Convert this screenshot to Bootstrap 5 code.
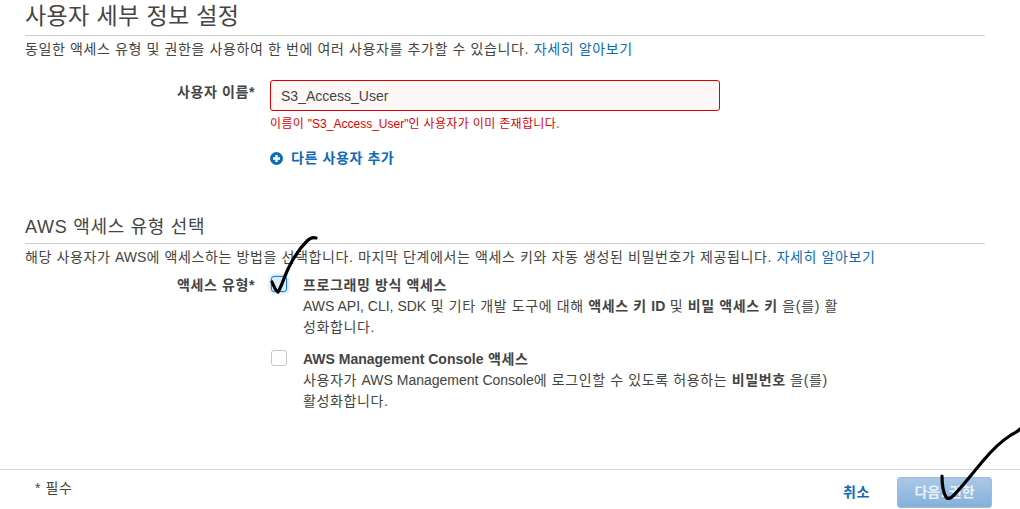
<!DOCTYPE html>
<html lang="ko">
<head>
<meta charset="utf-8">
<title>사용자 세부 정보 설정</title>
<link href="https://cdn.jsdelivr.net/npm/bootstrap@5.3.0/dist/css/bootstrap.min.css" rel="stylesheet">
<style>
html,body{height:509px;overflow:hidden;background:#fff}
body{font-family:"Liberation Sans","Noto Sans CJK KR",sans-serif;font-size:14px;color:#444;line-height:21px;position:relative;letter-spacing:.62px}
.lat{letter-spacing:0}
.sheet{height:469px;padding:0 35px 0 25px}
.head-a{font-size:23px;font-weight:400;color:#444;line-height:26px;margin:0;padding:3px 0 6px;border-bottom:1px solid #ccc;letter-spacing:.4px}
.head-b{font-size:18px;font-weight:400;color:#444;line-height:22px;margin:0;padding:0 0 5px;border-bottom:1px solid #ccc;letter-spacing:.7px}
.desc{margin:3px 0 0;height:21px}
.desc a,.more{color:#0e6bb8;text-decoration:none}
.first-row{margin-top:20px}
.lab{width:230px;flex:none;text-align:right;font-weight:700;color:#444;margin-right:15px}
.name-lab{padding-top:2px}
.name-in{width:450px;height:31px;border:1px solid #d00;border-radius:3px;background:#fdf7f6;color:#444;font-size:14px;padding:0 10px;box-shadow:none;letter-spacing:0}
.err{color:#d00;font-size:12px;line-height:16px;margin-top:4px;letter-spacing:.35px;margin-top:5px}
.more{font-weight:700;font-size:14px;margin-top:16px;height:20px;margin-bottom:48px;letter-spacing:.6px}
.type-row{margin-top:7px}
.opt{height:74px;gap:16px}
.tick{width:16px;height:16px;flex:none;margin:1px 0 0 1px;border:1px solid #c8c8c8;border-radius:3px;background:#fff;appearance:none}
.tick.on{border-color:#1a7ad4;box-shadow:0 0 4px #7db6ec;background:#dcebfa}
.opt-t{width:540px}
.opt-t b{color:#444}
.foot{height:40px;border-top:1px solid #d5d5d5;padding:7px 28px 1px 35px}
.req{font-size:14px;padding-top:1px}
.cancel{color:#0e6bb8;font-weight:700;font-size:14px;text-decoration:none;margin-right:27px}
.next{width:95px;height:31px;padding:0;border:1px solid #9cbfe0;border-radius:3px;background:linear-gradient(#a9c8e8,#86b0da);color:#e8f0f8;font-weight:700;font-size:14px}
.scrawl{position:absolute;left:0;top:0;pointer-events:none}
</style>
</head>
<body>
<div class="sheet">
  <h2 class="head-a">사용자 세부 정보 설정</h2>
  <p class="desc">동일한 액세스 유형 및 권한을 사용하여 한 번에 여러 사용자를 추가할 수 있습니다. <a href="#">자세히 알아보기</a></p>
  <div class="d-flex first-row">
    <div class="lab name-lab">사용자 이름*</div>
    <div>
      <input class="form-control name-in" type="text" value="S3_Access_User">
      <div class="err">이름이 <span class="lat">"S3_Access_User"</span>인 사용자가 이미 존재합니다.</div>
      <a href="#" class="more d-flex align-items-center gap-2">
        <svg width="13" height="13" viewBox="0 0 13 13"><circle cx="6.5" cy="6.5" r="6.5" fill="#0e6bb8"/><path d="M6.5 3v7M3 6.500h7" stroke="#fff" stroke-width="2.400"/></svg>
        다른 사용자 추가
      </a>
    </div>
  </div>
  <h3 class="head-b">AWS 액세스 유형 선택</h3>
  <p class="desc">해당 사용자가 <span class="lat">AWS</span>에 액세스하는 방법을 선택합니다. 마지막 단계에서는 액세스 키와 자동 생성된 비밀번호가 제공됩니다. <a href="#">자세히 알아보기</a></p>
  <div class="d-flex type-row">
    <div class="lab">액세스 유형*</div>
    <div>
      <div class="d-flex opt">
        <input class="tick on" type="checkbox" aria-label="프로그래밍 방식 액세스">
        <div class="opt-t"><b>프로그래밍 방식 액세스</b><br><span class="lat">AWS API, CLI, SDK</span> 및 기타 개발 도구에 대해 <b>액세스 키 <span class="lat">ID</span></b> 및 <b>비밀 액세스 키</b> 을(를) 활성화합니다.</div>
      </div>
      <div class="d-flex opt">
        <input class="tick" type="checkbox" aria-label="AWS Management Console 액세스">
        <div class="opt-t"><b><span class="lat">AWS Management Console</span> 액세스</b><br>사용자가 <span class="lat">AWS Management Console</span>에 로그인할 수 있도록 허용하는 <b>비밀번호</b> 을(를) 활성화합니다.</div>
      </div>
    </div>
  </div>
</div>
<div class="foot d-flex align-items-start justify-content-between">
  <span class="req">* 필수</span>
  <div class="d-flex align-items-center">
    <a href="#" class="cancel">취소</a>
    <button type="button" class="next">다음: 권한</button>
  </div>
</div>
<svg class="scrawl" width="1020" height="509" viewBox="0 0 1020 509" fill="none" stroke="#000" stroke-linecap="round" stroke-linejoin="round">
  <path d="M272 282C274 287 276 291 278 292C281 288 284 277 289 267C294 257 301 247 307 241C310 238 313 237 316 238" stroke-width="3.200"/>
  <path d="M942 476C942 484 943 492 946 497C948 500 951 498 954 495C962 487 972 474 982 462C992 450 1003 440 1011 435C1015 433 1018 431 1020 429" stroke-width="3.200"/>
</svg>
</body>
</html>
